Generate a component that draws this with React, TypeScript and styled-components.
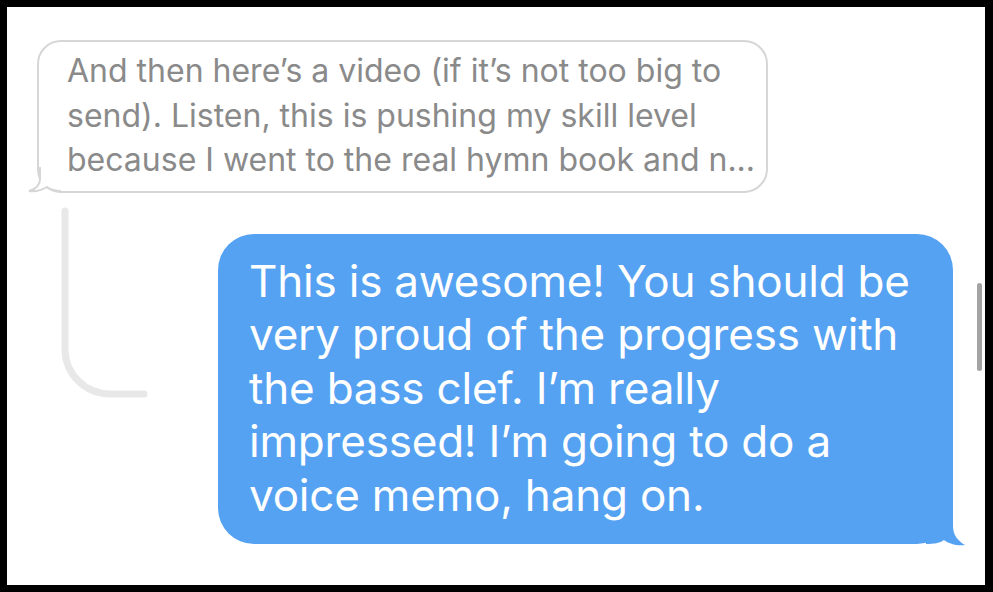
import React from 'react';
import styled, { createGlobalStyle } from 'styled-components';

const GlobalStyle = createGlobalStyle`
  html, body {
    margin: 0;
    padding: 0;
    background: #000000;
  }
`

const Frame = styled.div`
  box-sizing: border-box;
  width: 993px;
  height: 592px;
  background: #000000;
  padding: 7px 8px 7px 7px;
`

const Screen = styled.div`
  position: relative;
  box-sizing: border-box;
  width: 100%;
  height: 100%;
  background: #FFFFFF;
  overflow: hidden;
  display: flex;
  flex-direction: column;
  padding: 33px 32px 0 30px;
  font-family: 'Inter', 'Liberation Sans', sans-serif;
`

const ReplyBubble = styled.div`
  position: relative;
  align-self: flex-start;
  box-sizing: border-box;
  width: 731px;
  border: 2px solid #d6d6d6;
  border-radius: 24px;
  padding: 7px 20px 8px 28px;
  background: #FFFFFF;
`

const ReplyLine = styled.div`
  font-size: 32px;
  line-height: 44.5px;
  color: #8a8a8a;
  white-space: nowrap;
`

const ThreadRow = styled.div`
  display: flex;
  align-items: flex-start;
  margin-top: 13px;
`

const Connector = styled.svg`
  flex: none;
  margin-left: 21px;
`

const SentBubble = styled.div`
  position: relative;
  margin-left: auto;
  margin-top: 28px;
  box-sizing: border-box;
  width: 735px;
  background: #56a2f2;
  border-radius: 36px;
  padding: 21px 20px 22px 31px;
`

const SentLine = styled.div`
  font-size: 44px;
  line-height: 53.5px;
  color: #FFFFFF;
  white-space: nowrap;
  letter-spacing: -0.2px;
`

const Tail = styled.svg<{side: 'left' | 'right'}>`
  position: absolute;
  bottom: ${(props) => props.side === 'left' ? '-4px' : '-2px'};
  ${(props) => props.side === 'left' ? 'left: -12px;' : 'right: -13px;'}
`

const ScrollThumb = styled.div`
  position: absolute;
  right: 3px;
  top: 276px;
  width: 5px;
  height: 88px;
  border-radius: 3px;
  background: #a3a3a3;
`

const replyLines = [
  'And then here\u2019s a video (if it\u2019s not too big to',
  'send). Listen, this is pushing my skill level',
  'because I went to the real hymn book and n...',
]

const sentLines = [
  'This is awesome! You should be',
  'very proud of the progress with',
  'the bass clef. I\u2019m really',
  'impressed! I\u2019m going to do a',
  'voice memo, hang on.',
]

export default function App() {
  return (
    <>
      <GlobalStyle />
      <Frame>
        <Screen>
          <ReplyBubble>
            {replyLines.map((line, index) => (
              <ReplyLine key={index}>{line}</ReplyLine>
            ))}
            <Tail side="left" width="34" height="28" viewBox="0 0 34 28">
              <path d="M13 0 L13 12 C13 18 9 22 2 24 C9 25 15 23 20 20 C24 23 28 24 34 24 L34 0 Z" fill="#FFFFFF" />
              <path d="M13 0 L13 12 C13 18 9 22 2 24 C9 25 15 23 20 20 C24 23 28 24 34 24" fill="none" stroke="#d6d6d6" strokeWidth="2" />
            </Tail>
          </ReplyBubble>
          <ThreadRow>
            <Connector width="100" height="200" viewBox="0 0 100 200">
              <path d="M7 5 L7 143 A45 45 0 0 0 52 188 L86 188" fill="none" stroke="#e8e8e8" strokeWidth="7" strokeLinecap="round" />
            </Connector>
            <SentBubble>
              {sentLines.map((line, index) => (
                <SentLine key={index}>{line}</SentLine>
              ))}
              <Tail side="right" width="40" height="44" viewBox="0 0 40 44">
                <path d="M0 0 L27 0 L27 24 C27 33 32 39 39 43 C31 44 23 42 18 38 C14 41 8 42 0 42 Z" fill="#56a2f2" />
              </Tail>
            </SentBubble>
          </ThreadRow>
          <ScrollThumb />
        </Screen>
      </Frame>
    </>
  )
}
